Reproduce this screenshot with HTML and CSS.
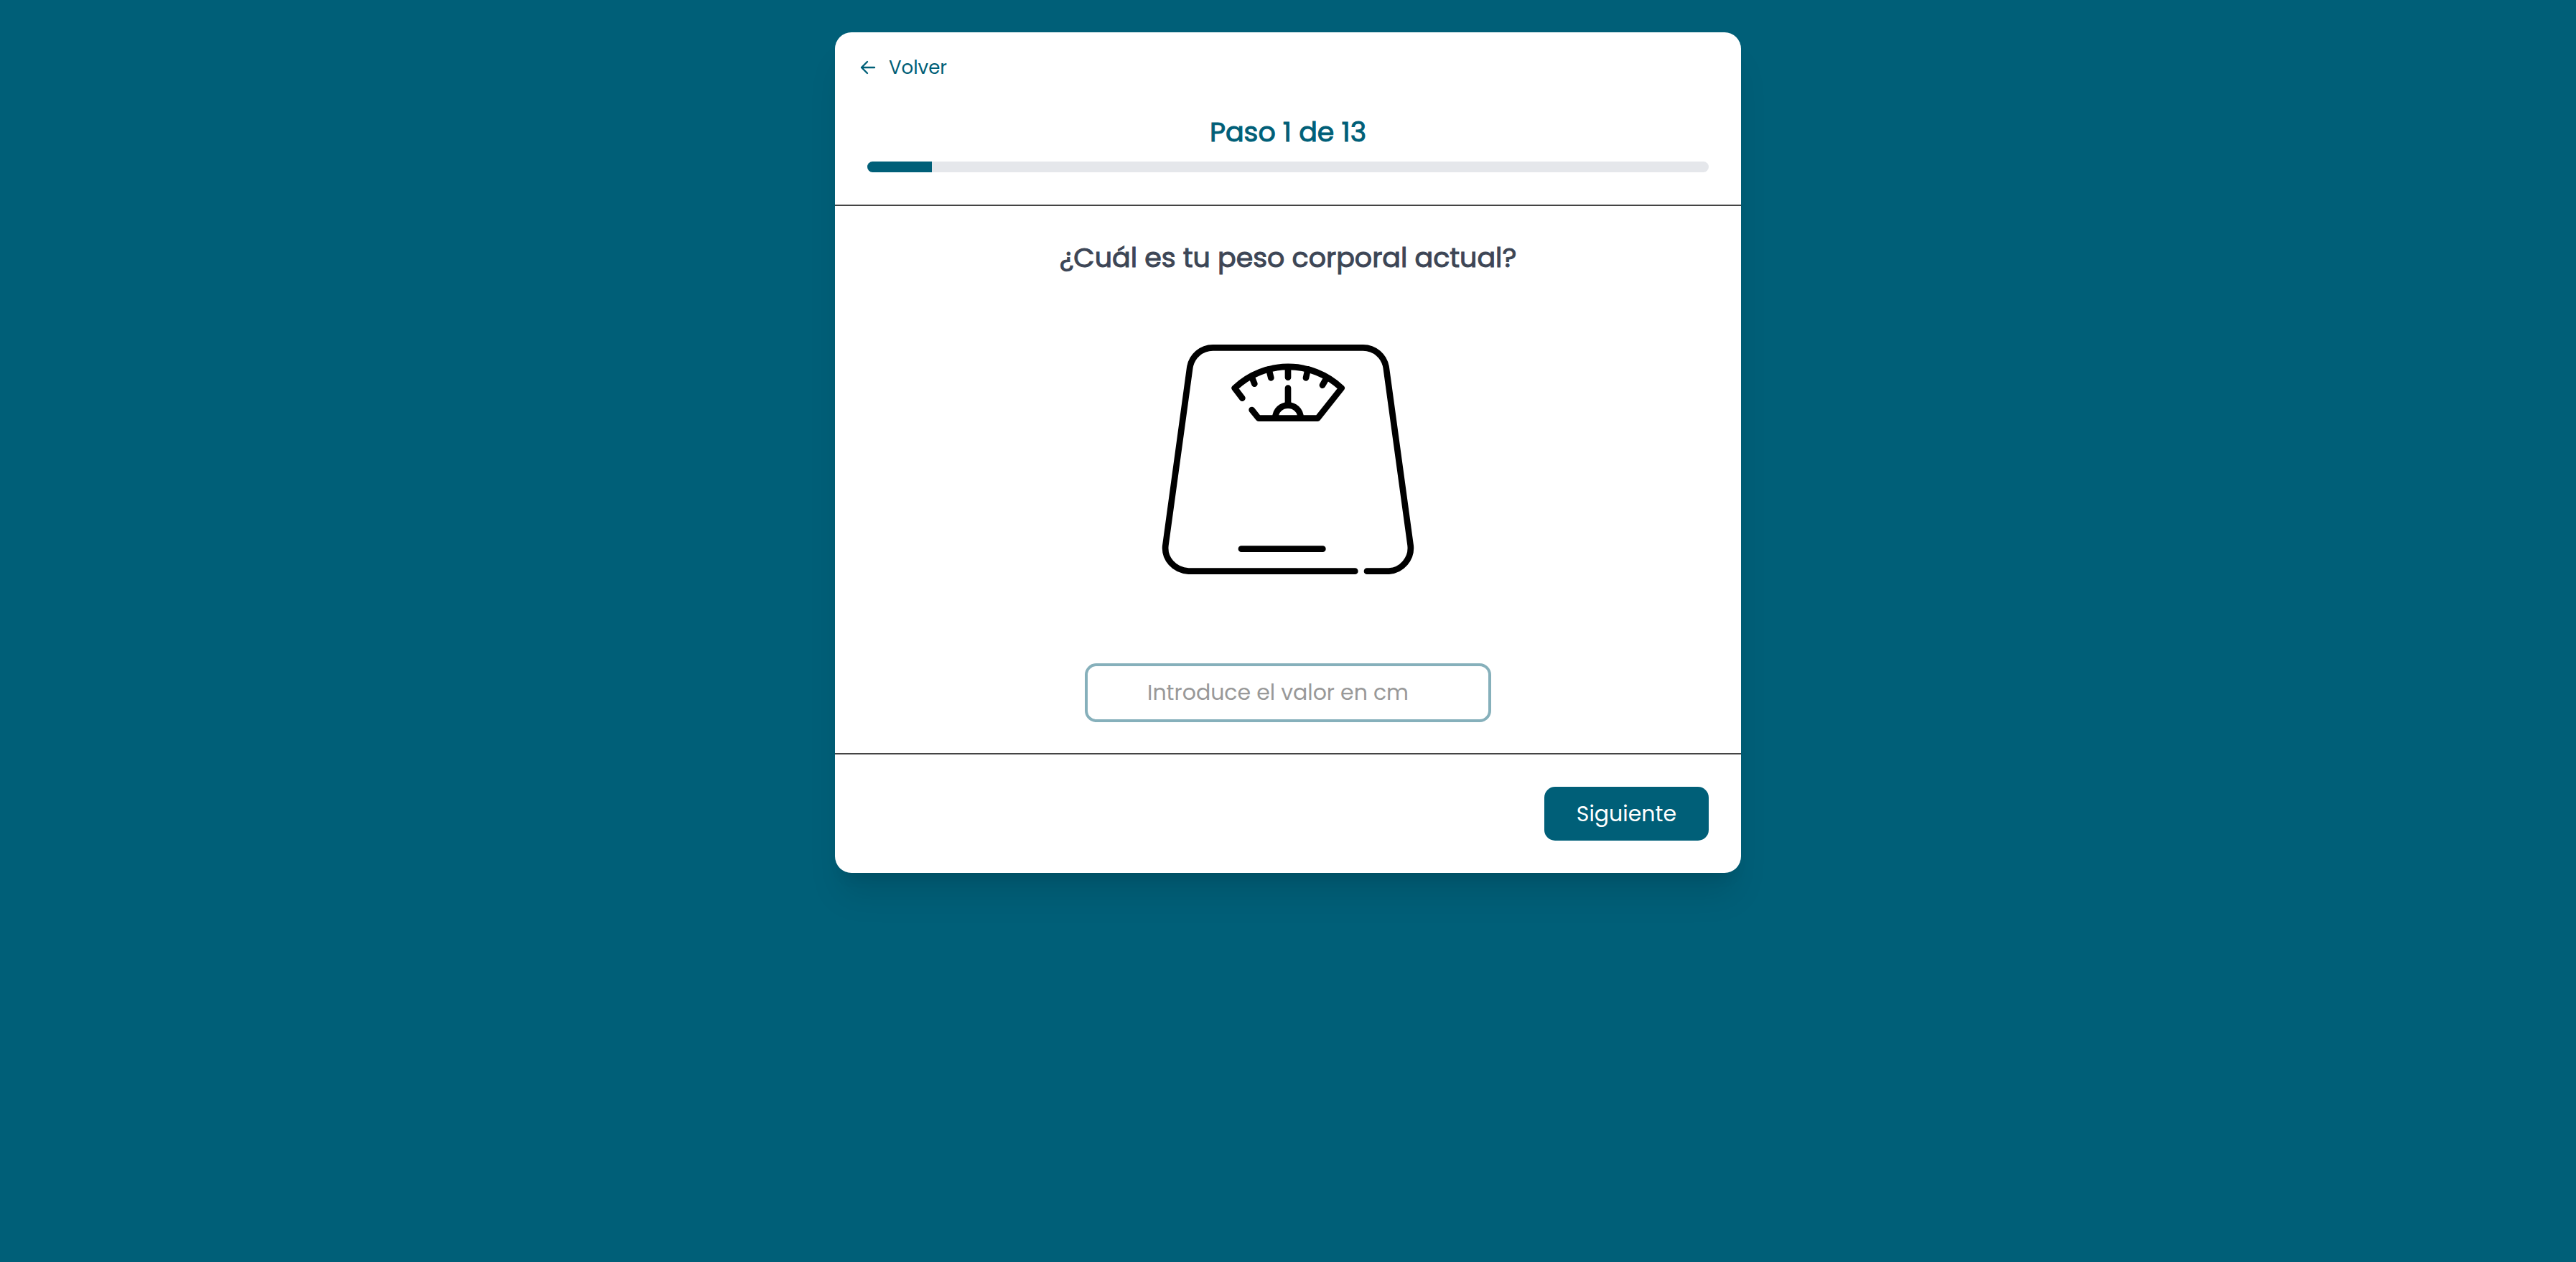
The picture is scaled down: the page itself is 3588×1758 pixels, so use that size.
FILE: index.html
```html
<!DOCTYPE html>
<html lang="es">
<head>
  <meta charset="utf-8">
  <meta name="viewport" content="width=device-width, initial-scale=1">
  <title>Paso 1 de 13</title>
  <link rel="stylesheet" href="styles.css">
</head>
<body>
  <main class="page">
    <form class="card">
      <header class="card-header">
        <a class="back" href="#">
          <svg class="back-icon" viewBox="0 0 22 22" aria-hidden="true">
            <path d="M20 11H2M10 3l-8 8 8 8"/>
          </svg>
          <span>Volver</span>
        </a>
        <h1 class="step">Paso 1 de 13</h1>
        <div class="progress" role="progressbar" aria-label="Progreso" aria-valuemin="0" aria-valuemax="13" aria-valuenow="1">
          <div class="progress-fill" style="width: 7.7%"></div>
        </div>
      </header>

      <section class="card-body">
        <label class="question" for="weight">¿Cuál es tu peso corporal actual?</label>
        <svg class="scale" viewBox="12 0 1140 1080" aria-hidden="true">
          <path d="M862 1007H166C106 1003 64 955 70 900L172 155C180 108 220 73 268 73H896C944 73 984 108 992 155L1094 900C1100 955 1058 1003 1004 1007H912"/>
          <path d="M387 914H727"/>
          <path d="M391 284L359 242C485 123 680 123 806 242L706 368H459L431 333"/>
          <path d="M582 158V197M582 242V310M502 163L511 199M665 163L657 199M430 194L442 224M739 207L726 230"/>
          <path d="M529 368C529 296 635 296 635 368"/>
        </svg>
        <input class="field" id="weight" type="text" inputmode="decimal" placeholder="Introduce el valor en cm">
      </section>

      <footer class="card-footer">
        <button class="next" type="submit">Siguiente</button>
      </footer>
    </form>
  </main>
</body>
</html>
```
FILE: styles.css
```css
:root {
  --brand: #005f78;
  --line: #444444;
}

* {
  box-sizing: border-box;
}

body {
  margin: 0;
  min-height: 100vh;
  background: var(--brand);
  font-family: Poppins, Inter, sans-serif;
}

.page {
  padding: 45px;
}

.card {
  max-width: 1262px;
  margin: 0 auto;
  border-radius: 23px;
  background: #ffffff;
  box-shadow: 0 38px 47px -9px rgba(0, 0, 0, 0.1), 0 15px 19px -11px rgba(0, 0, 0, 0.1);
}

.card-header {
  display: flex;
  flex-direction: column;
  padding: 29px 45px 45px;
  border-bottom: 2px solid var(--line);
}

.back {
  display: flex;
  align-items: center;
  align-self: flex-start;
  gap: 18px;
  margin-left: -10px;
  color: var(--brand);
  font-size: 26px;
  line-height: 40px;
  text-decoration: none;
}

.back-icon {
  width: 22px;
  height: 22px;
  fill: none;
  stroke: currentColor;
  stroke-width: 2.4;
  stroke-linecap: round;
  stroke-linejoin: round;
}

.step,
.question {
  font-size: 38px;
  font-weight: 400;
  text-align: center;
  -webkit-text-stroke: 1px currentColor;
}

.step {
  margin: 41px 0 12px;
  color: var(--brand);
  line-height: 58px;
}

.progress {
  height: 15px;
  overflow: hidden;
  border-radius: 8px;
  background: #e5e7eb;
}

.progress-fill {
  height: 100%;
  background: var(--brand);
}

.card-body {
  display: flex;
  flex-direction: column;
  align-items: center;
  padding: 44px 45px 43px;
  border-bottom: 2px solid var(--line);
}

.question {
  color: #3d4656;
  line-height: 56px;
}

.scale {
  width: 380px;
  max-width: 100%;
  height: 360px;
  margin: 73px 0 104px;
  fill: none;
  stroke: #000000;
  stroke-width: 26;
  stroke-linecap: round;
  stroke-linejoin: round;
}

.field {
  width: 566px;
  max-width: 100%;
  height: 82px;
  padding: 0 43px 0 15px;
  border: 4px solid #86b0bb;
  border-radius: 16px;
  background: #ffffff;
  color: #374151;
  font: inherit;
  font-size: 30px;
  text-align: center;
}

.field::placeholder {
  color: #999999;
  opacity: 1;
}

.card-footer {
  display: flex;
  justify-content: flex-end;
  padding: 45px;
}

.next {
  height: 75px;
  padding: 0 45px;
  border: 0;
  border-radius: 15px;
  background: var(--brand);
  color: #ffffff;
  font: inherit;
  font-size: 30px;
  cursor: pointer;
}
```
